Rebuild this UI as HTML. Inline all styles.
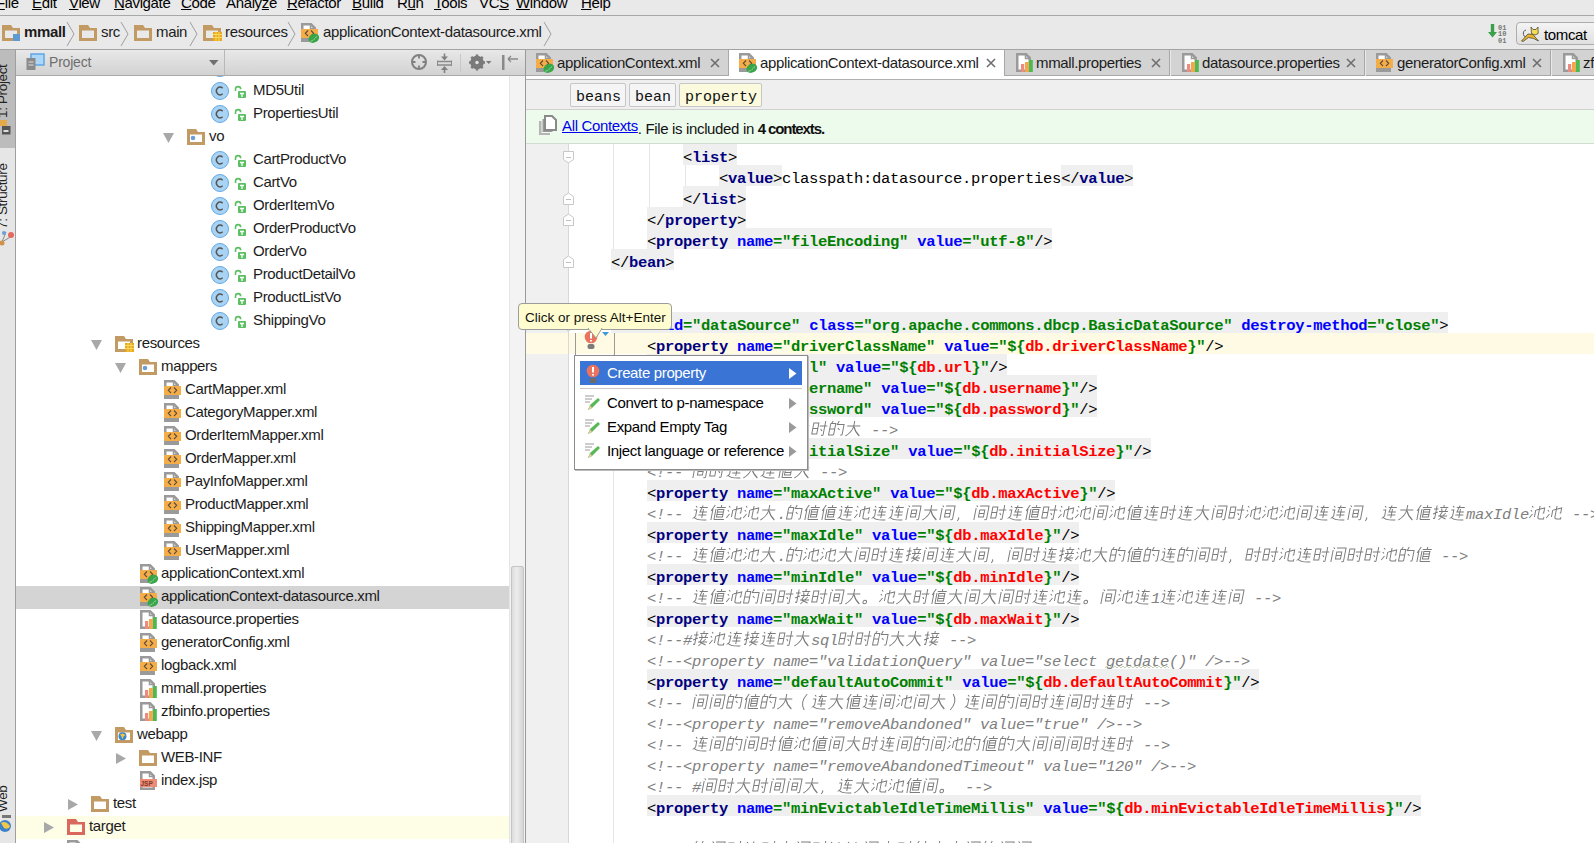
<!DOCTYPE html><html><head><meta charset="utf-8"><style>*{margin:0;padding:0;box-sizing:border-box}
html,body{width:1594px;height:843px;overflow:hidden;background:#e9e9e9;font-family:"Liberation Sans",sans-serif;position:relative}
.a{position:absolute}
svg.a{overflow:visible}
.ui{font-family:"Liberation Sans",sans-serif;font-size:15px;color:#000;white-space:pre;letter-spacing:-0.35px}
u{text-decoration:underline;text-underline-offset:1px}
.menubar{left:0;top:0;width:1594px;height:16px;background:#e9e9e9;border-bottom:1px solid #a8a8a8}
.menu{top:-7px;line-height:20px}
.navbar{left:0;top:16px;width:1594px;height:34px;background:#e9e9e9;border-bottom:1px solid #a3a3a3}
.nav{top:22px;line-height:20px;color:#1c1c1c}
.tomcat{left:1516px;top:22px;width:90px;height:23px;border:1px solid #adadad;border-radius:4px;background:linear-gradient(#f4f4f4,#e0e0e0)}
.strip{left:0;top:50px;width:16px;height:793px;background:#e6e6e6;border-right:1px solid #9f9f9f}
.ptab{left:0;top:50px;width:15px;height:98px;background:#bcbcbc}
.vtext{transform-origin:0 0;transform:rotate(-90deg);line-height:16px;font-size:13.5px;color:#222}
.phead{left:16px;top:50px;width:509px;height:26px;background:linear-gradient(#e8e8e8,#d2d2d2);border-bottom:1px solid #a9a9a9}
.tree{left:16px;top:76px;width:493px;height:767px;background:#fff;overflow:hidden}
.tr{line-height:23px;margin-top:-2px;color:#1c1c1c}
.sbar{left:509px;top:76px;width:16px;height:767px;background:#f3f3f3;border-left:1px solid #e4e4e4}
.thumb{left:511px;top:566px;width:13px;height:300px;border:1px solid #c4c4c4;border-radius:2px;background:linear-gradient(90deg,#dcdcdc,#ececec 40%,#d6d6d6)}
.divider{left:525px;top:50px;width:1px;height:793px;background:#999}
.tabbar{left:526px;top:50px;width:1068px;height:26px;background:#e9e9e9}
.tab{top:50px;height:26px;background:#d3d3d3;border-right:1px solid #a8a8a8;border-bottom:1px solid #a8a8a8}
.tab.act{background:#fff;border-bottom:none}
.tabt{top:52px;line-height:22px;color:#1c1c1c}
.crumbs{left:526px;top:79px;width:1068px;height:31px;background:#efefef;border-top:1px solid #b0b0b0;border-bottom:1px solid #d0d0d0}
.crumb{top:83px;height:24px;border:1px solid #c6c6c6;border-radius:2px;background:#f5f5f5;font-family:"Liberation Mono",monospace;font-size:15px;line-height:28px;text-indent:5px;color:#111}
.crumb.cur{background:#fbfadc}
.ctxbar{left:526px;top:110px;width:1068px;height:34px;background:#edfbed;border-bottom:1px solid #d3dcd3}
.ctx{top:119px;line-height:20px;color:#111}
.ctx b{letter-spacing:-1.1px}
.lnk{color:#0000ee;text-decoration:underline;position:relative;top:-3px}
.gutter{left:526px;top:144px;width:43px;height:699px;background:#f0f0f0}
.editor{left:569px;top:144px;width:1025px;height:699px;background:#fff}
.row{position:absolute;left:575px;height:21px;line-height:29px;font-family:"Liberation Mono",monospace;font-size:15.5px;letter-spacing:-0.3px;white-space:pre;color:#000}
.tg{background:#efefef;display:inline-block;height:21px;vertical-align:top}
.tg0{display:inline-block;height:21px;vertical-align:top}
.b{font-weight:normal;color:#000}
.t{font-weight:bold;color:#000080}
.n{font-weight:bold;color:#0000ff}
.v{font-weight:bold;color:#008000}
.p{font-weight:bold;color:#ff0000}
.c{font-style:italic;color:#808080}
.k{display:inline-block;width:17px;height:21px;vertical-align:top;transform:skewX(-11deg)}
.k use{fill:none;stroke:#7c7c7c;stroke-width:1}
.tip{left:518px;top:303px;width:154px;height:27px;background:#fffdd0;border:1px solid #9c9c9c;border-radius:4px;font-family:"Liberation Sans",sans-serif;font-size:13.5px;letter-spacing:0px;line-height:28px;text-indent:6px;white-space:pre;color:#111}
.popup{left:574px;top:355px;width:234px;height:115px;background:#fff;border:1px solid #8c8c8c;box-shadow:1px 1px 0 #bbb}
.sel{left:580px;top:361px;width:222px;height:24px;background:#3a74d4}
.pit{line-height:22px}
</style></head><body>
<svg width="0" height="0" style="position:absolute"><defs><symbol id="g0" viewBox="0 0 17 21"><path d="M3 5L4.5 6.5M2 9H4.5V15L2 17.5M3 16Q6 19.5 16 19M7 6.5H15M10 4.5L8 11H15M11 8V17M7 14H15"/></symbol><symbol id="g1" viewBox="0 0 17 21"><path d="M1.5 8H6M4 4.5V17Q4 18 2.5 17M1.5 13L6 11M11 4V6M7.5 6.5H15.5M9 7.5L10 10M14 7.5L13 10M7 10.5H16M10.5 10.5L8.5 15L15 18M14 12L8 19M7 15H16"/></symbol><symbol id="g2" viewBox="0 0 17 21"><path d="M2 5L3.5 6.5M1.5 9L3 10.5M1.5 17L4 13M7 9L15 7V12H14M10 5V16Q10 18 12 18H16V16M6.5 9V16"/></symbol><symbol id="g3" viewBox="0 0 17 21"><path d="M4 4L3 6M2 6.5H7V18M2 6.5V18H7M2 12H7M10 4L8.5 8M9 7.5H15.5V17Q15.5 18.5 13.5 18M10 11L12 13"/></symbol><symbol id="g4" viewBox="0 0 17 21"><path d="M2 9H15M8.5 4V9Q8 15 2 19M9 10Q11 15 16 19"/></symbol><symbol id="g5" viewBox="0 0 17 21"><path d="M2 6H7V17H2ZM2 11.5H7M8.5 9H16M13.5 4V17.5Q13.5 19 11.5 18M10 12L11.5 14"/></symbol><symbol id="g6" viewBox="0 0 17 21"><path d="M2.5 4.5L4 6M2.5 7V19M6 5H15V18Q15 19 13 18.5M6.5 9H11.5V16H6.5ZM6.5 12.5H11.5"/></symbol><symbol id="g7" viewBox="0 0 17 21"><path d="M5 4L2 10M3.5 8V19M7 6.5H16M11.5 4V6.5M8.5 8.5H14.5V16H8.5ZM8.5 11H14.5M8.5 13.5H14.5M6.5 18.5H16.5M6.5 8V18.5"/></symbol><symbol id="gc" viewBox="0 0 17 21"><path d="M3.5 16.5Q5 17.5 3 20"/></symbol><symbol id="gp" viewBox="0 0 17 21"><path d="M4 15.2A1.8 1.8 0 1 0 4.01 15.2Z"/></symbol><symbol id="gl" viewBox="0 0 17 21"><path d="M12 4Q6 12 12 20"/></symbol><symbol id="gr" viewBox="0 0 17 21"><path d="M5 4Q11 12 5 20"/></symbol></defs></svg>
<div class="a menubar"></div>
<div class="a ui menu" style="left:-4px"><u>F</u>ile</div>
<div class="a ui menu" style="left:32px"><u>E</u>dit</div>
<div class="a ui menu" style="left:69px"><u>V</u>iew</div>
<div class="a ui menu" style="left:114px"><u>N</u>avigate</div>
<div class="a ui menu" style="left:181px"><u>C</u>ode</div>
<div class="a ui menu" style="left:226px">Analy<u>z</u>e</div>
<div class="a ui menu" style="left:287px"><u>R</u>efactor</div>
<div class="a ui menu" style="left:352px"><u>B</u>uild</div>
<div class="a ui menu" style="left:397px">R<u>u</u>n</div>
<div class="a ui menu" style="left:434px"><u>T</u>ools</div>
<div class="a ui menu" style="left:479px">VC<u>S</u></div>
<div class="a ui menu" style="left:516px"><u>W</u>indow</div>
<div class="a ui menu" style="left:581px"><u>H</u>elp</div>
<div class="a navbar"></div>
<svg class="a" style="left:2px;top:25px" width="20" height="17" viewBox="0 0 20 17"><path d="M0 0H9L11 3H18V16H0ZM3 5.5V13H15V5.5Z" fill="#c29a63" fill-rule="evenodd"/><rect x="11" y="9" width="7" height="7" fill="#5e9bd3"/></svg>
<div class="a ui nav" style="left:24px;font-weight:bold">mmall</div>
<svg class="a" style="left:79px;top:25px" width="20" height="17" viewBox="0 0 20 17"><path d="M0 0H9L11 3H18V16H0ZM3 5.5V13H15V5.5Z" fill="#c29a63" fill-rule="evenodd"/></svg>
<div class="a ui nav" style="left:101px">src</div>
<svg class="a" style="left:134px;top:25px" width="20" height="17" viewBox="0 0 20 17"><path d="M0 0H9L11 3H18V16H0ZM3 5.5V13H15V5.5Z" fill="#c29a63" fill-rule="evenodd"/></svg>
<div class="a ui nav" style="left:156px">main</div>
<svg class="a" style="left:203px;top:25px" width="20" height="17" viewBox="0 0 20 17"><path d="M0 0H9L11 3H18V16H0ZM3 5.5V13H15V5.5Z" fill="#c29a63" fill-rule="evenodd"/><rect x="10" y="7" width="9" height="9" fill="#e8a91c"/><path d="M10 9.5H19M10 12.5H19M13 7V16M16 7V16" stroke="#f8d860" stroke-width="1"/></svg>
<div class="a ui nav" style="left:225px">resources</div>
<svg class="a" style="left:301px;top:23px" width="19" height="22" viewBox="0 0 19 22"><path d="M1.25 1.25H10L13.75 5V17.75H1.25Z" fill="#fff" stroke="#9a9a9a" stroke-width="2.5"/><path d="M9.5 1.5V5.5H13.5" fill="none" stroke="#9a9a9a" stroke-width="1.5"/><rect x="0" y="15" width="15" height="4" fill="#9a9a9a"/><rect x="0" y="6" width="17" height="9" fill="#f4ad47"/><path d="M7 7.5L4.3 10.3L7 13M10 7.5L12.7 10.3L10 13" fill="none" stroke="#5e4b3f" stroke-width="1.1"/><ellipse cx="12.8" cy="15.3" rx="5.6" ry="4.3" fill="#37a548" transform="rotate(-28 12.8 15.3)"/><path d="M9.5 18.3Q13.5 17 16 13" fill="none" stroke="#d8efd8" stroke-width="0.9" stroke-dasharray="1.2 0.8"/></svg>
<div class="a ui nav" style="left:323px">applicationContext-datasource.xml</div>
<svg class="a" style="left:66px;top:22px" width="10" height="24" viewBox="0 0 10 24"><path d="M1 0L8 12L1 24" fill="none" stroke="#8a8a8a" stroke-width="0.8"/></svg>
<svg class="a" style="left:120px;top:22px" width="10" height="24" viewBox="0 0 10 24"><path d="M1 0L8 12L1 24" fill="none" stroke="#8a8a8a" stroke-width="0.8"/></svg>
<svg class="a" style="left:189px;top:22px" width="10" height="24" viewBox="0 0 10 24"><path d="M1 0L8 12L1 24" fill="none" stroke="#8a8a8a" stroke-width="0.8"/></svg>
<svg class="a" style="left:287px;top:22px" width="10" height="24" viewBox="0 0 10 24"><path d="M1 0L8 12L1 24" fill="none" stroke="#8a8a8a" stroke-width="0.8"/></svg>
<svg class="a" style="left:543px;top:22px" width="10" height="24" viewBox="0 0 10 24"><path d="M1 0L8 12L1 24" fill="none" stroke="#8a8a8a" stroke-width="0.8"/></svg>
<svg class="a" style="left:1488px;top:22px" width="22" height="24" viewBox="0 0 22 24"><rect x="2.8" y="2" width="3.4" height="10" fill="#3aa04a"/><path d="M0 10H9L4.5 15.5Z" fill="#3aa04a"/><g font-family="Liberation Mono" font-size="7" font-weight="bold" fill="#777"><text x="10" y="7.5">01</text><text x="10" y="14">10</text><text x="10" y="20.5">01</text></g></svg>
<div class="a tomcat"></div>
<svg class="a" style="left:1521px;top:26px" width="20" height="18" viewBox="0 0 20 18"><path d="M5 4A3.5 3.5 0 1 0 7 11" fill="none" stroke="#555" stroke-width="1"/><path d="M0.5 15L7 8L12 8.5L17.5 15L12.5 12.5L7.5 11.5L2 15.5Z" fill="#e9b32e" stroke="#3a3a2a" stroke-width="0.7"/><path d="M10 1L12 3.5H15L17 1L17.2 7.5Q14 10.5 10.5 7.5Z" fill="#f3dc55" stroke="#3a3a2a" stroke-width="0.7"/></svg>
<div class="a ui" style="left:1544px;top:25px;line-height:20px;font-size:15px">tomcat</div>
<div class="a strip"></div><div class="a ptab"></div>
<div class="a ui vtext" style="left:-5px;top:118px">1: Project</div>
<svg class="a" style="left:0px;top:118px" width="15" height="18" viewBox="0 0 15 18"><rect x="0" y="2" width="7" height="6" fill="#e3a94b"/><rect x="2" y="8" width="8.5" height="8.5" fill="#555"/><rect x="3.5" y="12" width="5" height="2" fill="#ddd"/></svg>
<div class="a ui vtext" style="left:-5px;top:229px">7: Structure</div>
<svg class="a" style="left:0px;top:228px" width="15" height="22" viewBox="0 0 15 22"><path d="M2 14L6 4M2 14L12 8" stroke="#888" stroke-width="1"/><circle cx="2" cy="15" r="2.5" fill="#d0924a"/><circle cx="11" cy="7" r="3" fill="#e46a5e"/><circle cx="4" cy="5" r="2" fill="#6aa0d8"/></svg>
<div class="a ui vtext" style="left:-5px;top:812px">Web</div>
<svg class="a" style="left:0px;top:815px" width="15" height="20" viewBox="0 0 15 20"><rect x="2" y="0" width="9" height="3" fill="#777"/><circle cx="5" cy="11" r="6" fill="#3d83c9"/><path d="M1 8Q4 6 7 8T10 12Q7 15 4 13Z" fill="#f2c84b"/></svg>
<div class="a phead"></div>
<div class="a" style="left:224px;top:50px;width:1px;height:25px;background:#b8b8b8"></div>
<svg class="a" style="left:26px;top:53px" width="20" height="18" viewBox="0 0 20 18"><rect x="5" y="1" width="13" height="11" fill="#aed6f7" stroke="#5ea6e6" stroke-width="1.5"/><rect x="0.5" y="5" width="9" height="12" fill="#8a8a8a"/><path d="M2.5 9H7.5M2.5 12H7.5" stroke="#ddd" stroke-width="1"/></svg>
<div class="a ui" style="left:49px;top:51px;line-height:22px;color:#6e6e6e;font-size:14px;letter-spacing:-0.2px">Project</div>
<svg class="a" style="left:209px;top:60px" width="10" height="6" viewBox="0 0 10 6"><path d="M0 0H9.5L4.75 5.5Z" fill="#707070"/></svg>
<svg class="a" style="left:410px;top:53px" width="19" height="19" viewBox="0 0 19 19"><circle cx="9" cy="9" r="7" fill="none" stroke="#808080" stroke-width="2"/><path d="M9 2V5.5M9 12.5V16M2 9H5.5M12.5 9H16" stroke="#808080" stroke-width="1.8"/></svg>
<svg class="a" style="left:437px;top:53px" width="16" height="19" viewBox="0 0 16 19"><path d="M0.5 8.5H14.5M0.5 12H14.5" stroke="#8a8a8a" stroke-width="1.5"/><path d="M0.5 7.5V13M14.5 7.5V13" stroke="#8a8a8a" stroke-width="1"/><path d="M4 3.5H11L7.5 7.5Z M4 17H11L7.5 13Z" fill="#808080"/><path d="M7.5 0.5V4M7.5 16.5V20" stroke="#808080" stroke-width="1.6"/></svg>
<div class="a" style="left:460px;top:54px;width:1px;height:18px;background:#c8c8c8"></div>
<svg class="a" style="left:469px;top:53px" width="24" height="19" viewBox="0 0 24 19"><circle cx="8" cy="9.5" r="5" fill="none" stroke="#7a7a7a" stroke-width="3.6"/><path d="M8 1.5V17.5M0 9.5H16M2.3 3.8L13.7 15.2M2.3 15.2L13.7 3.8" stroke="#7a7a7a" stroke-width="2.6"/><circle cx="8" cy="9.5" r="1.7" fill="#e2e2e2"/><path d="M17 8H22.5L19.75 11Z" fill="#7a7a7a"/></svg>
<svg class="a" style="left:501px;top:53px" width="18" height="19" viewBox="0 0 18 19"><rect x="1" y="2" width="2.5" height="15" fill="#8a8a8a"/><path d="M7 6H17M7 6L10 3M7 6L10 9" fill="none" stroke="#8a8a8a" stroke-width="1.3"/></svg>
<div class="a tree">
<svg class="a" style="left:195px;top:-17px" width="19" height="19" viewBox="0 0 19 19"><circle cx="9" cy="9" r="8.5" fill="#a9d3f3" stroke="#62a9e6" stroke-width="1"/><path d="M11.6 6.2A3.6 3.9 0 1 0 11.6 11.8" fill="none" stroke="#545454" stroke-width="1.5"/></svg>
<svg class="a" style="left:218px;top:-13px" width="12" height="12" viewBox="0 0 12 12"><path d="M1.5 5V3.2A2.6 2.6 0 0 1 6.7 3.2" fill="none" stroke="#5cbf63" stroke-width="1.6"/><rect x="4" y="5" width="8" height="7" rx="1" fill="#5cbf63"/><path d="M6 7.5H10M8 7.5V11" stroke="#fff" stroke-width="1.3"/></svg>
<svg class="a" style="left:195px;top:6px" width="19" height="19" viewBox="0 0 19 19"><circle cx="9" cy="9" r="8.5" fill="#a9d3f3" stroke="#62a9e6" stroke-width="1"/><path d="M11.6 6.2A3.6 3.9 0 1 0 11.6 11.8" fill="none" stroke="#545454" stroke-width="1.5"/></svg>
<svg class="a" style="left:218px;top:10px" width="12" height="12" viewBox="0 0 12 12"><path d="M1.5 5V3.2A2.6 2.6 0 0 1 6.7 3.2" fill="none" stroke="#5cbf63" stroke-width="1.6"/><rect x="4" y="5" width="8" height="7" rx="1" fill="#5cbf63"/><path d="M6 7.5H10M8 7.5V11" stroke="#fff" stroke-width="1.3"/></svg>
<div class="a ui tr" style="left:237px;top:4px">MD5Util</div>
<svg class="a" style="left:195px;top:29px" width="19" height="19" viewBox="0 0 19 19"><circle cx="9" cy="9" r="8.5" fill="#a9d3f3" stroke="#62a9e6" stroke-width="1"/><path d="M11.6 6.2A3.6 3.9 0 1 0 11.6 11.8" fill="none" stroke="#545454" stroke-width="1.5"/></svg>
<svg class="a" style="left:218px;top:33px" width="12" height="12" viewBox="0 0 12 12"><path d="M1.5 5V3.2A2.6 2.6 0 0 1 6.7 3.2" fill="none" stroke="#5cbf63" stroke-width="1.6"/><rect x="4" y="5" width="8" height="7" rx="1" fill="#5cbf63"/><path d="M6 7.5H10M8 7.5V11" stroke="#fff" stroke-width="1.3"/></svg>
<div class="a ui tr" style="left:237px;top:27px">PropertiesUtil</div>
<svg class="a" style="left:171px;top:53px" width="20" height="17" viewBox="0 0 20 17"><path d="M0 0H9L11 3H18V16H0ZM3 5.5V13H15V5.5Z" fill="#c29a63" fill-rule="evenodd"/><circle cx="6" cy="9" r="2.3" fill="#6b9fd6"/></svg>
<svg class="a" style="left:147px;top:57px" width="12" height="11" viewBox="0 0 12 11"><path d="M0 0H11L5.5 10Z" fill="#a8a8a8"/></svg>
<div class="a ui tr" style="left:193px;top:50px">vo</div>
<svg class="a" style="left:195px;top:75px" width="19" height="19" viewBox="0 0 19 19"><circle cx="9" cy="9" r="8.5" fill="#a9d3f3" stroke="#62a9e6" stroke-width="1"/><path d="M11.6 6.2A3.6 3.9 0 1 0 11.6 11.8" fill="none" stroke="#545454" stroke-width="1.5"/></svg>
<svg class="a" style="left:218px;top:79px" width="12" height="12" viewBox="0 0 12 12"><path d="M1.5 5V3.2A2.6 2.6 0 0 1 6.7 3.2" fill="none" stroke="#5cbf63" stroke-width="1.6"/><rect x="4" y="5" width="8" height="7" rx="1" fill="#5cbf63"/><path d="M6 7.5H10M8 7.5V11" stroke="#fff" stroke-width="1.3"/></svg>
<div class="a ui tr" style="left:237px;top:73px">CartProductVo</div>
<svg class="a" style="left:195px;top:98px" width="19" height="19" viewBox="0 0 19 19"><circle cx="9" cy="9" r="8.5" fill="#a9d3f3" stroke="#62a9e6" stroke-width="1"/><path d="M11.6 6.2A3.6 3.9 0 1 0 11.6 11.8" fill="none" stroke="#545454" stroke-width="1.5"/></svg>
<svg class="a" style="left:218px;top:102px" width="12" height="12" viewBox="0 0 12 12"><path d="M1.5 5V3.2A2.6 2.6 0 0 1 6.7 3.2" fill="none" stroke="#5cbf63" stroke-width="1.6"/><rect x="4" y="5" width="8" height="7" rx="1" fill="#5cbf63"/><path d="M6 7.5H10M8 7.5V11" stroke="#fff" stroke-width="1.3"/></svg>
<div class="a ui tr" style="left:237px;top:96px">CartVo</div>
<svg class="a" style="left:195px;top:121px" width="19" height="19" viewBox="0 0 19 19"><circle cx="9" cy="9" r="8.5" fill="#a9d3f3" stroke="#62a9e6" stroke-width="1"/><path d="M11.6 6.2A3.6 3.9 0 1 0 11.6 11.8" fill="none" stroke="#545454" stroke-width="1.5"/></svg>
<svg class="a" style="left:218px;top:125px" width="12" height="12" viewBox="0 0 12 12"><path d="M1.5 5V3.2A2.6 2.6 0 0 1 6.7 3.2" fill="none" stroke="#5cbf63" stroke-width="1.6"/><rect x="4" y="5" width="8" height="7" rx="1" fill="#5cbf63"/><path d="M6 7.5H10M8 7.5V11" stroke="#fff" stroke-width="1.3"/></svg>
<div class="a ui tr" style="left:237px;top:119px">OrderItemVo</div>
<svg class="a" style="left:195px;top:144px" width="19" height="19" viewBox="0 0 19 19"><circle cx="9" cy="9" r="8.5" fill="#a9d3f3" stroke="#62a9e6" stroke-width="1"/><path d="M11.6 6.2A3.6 3.9 0 1 0 11.6 11.8" fill="none" stroke="#545454" stroke-width="1.5"/></svg>
<svg class="a" style="left:218px;top:148px" width="12" height="12" viewBox="0 0 12 12"><path d="M1.5 5V3.2A2.6 2.6 0 0 1 6.7 3.2" fill="none" stroke="#5cbf63" stroke-width="1.6"/><rect x="4" y="5" width="8" height="7" rx="1" fill="#5cbf63"/><path d="M6 7.5H10M8 7.5V11" stroke="#fff" stroke-width="1.3"/></svg>
<div class="a ui tr" style="left:237px;top:142px">OrderProductVo</div>
<svg class="a" style="left:195px;top:167px" width="19" height="19" viewBox="0 0 19 19"><circle cx="9" cy="9" r="8.5" fill="#a9d3f3" stroke="#62a9e6" stroke-width="1"/><path d="M11.6 6.2A3.6 3.9 0 1 0 11.6 11.8" fill="none" stroke="#545454" stroke-width="1.5"/></svg>
<svg class="a" style="left:218px;top:171px" width="12" height="12" viewBox="0 0 12 12"><path d="M1.5 5V3.2A2.6 2.6 0 0 1 6.7 3.2" fill="none" stroke="#5cbf63" stroke-width="1.6"/><rect x="4" y="5" width="8" height="7" rx="1" fill="#5cbf63"/><path d="M6 7.5H10M8 7.5V11" stroke="#fff" stroke-width="1.3"/></svg>
<div class="a ui tr" style="left:237px;top:165px">OrderVo</div>
<svg class="a" style="left:195px;top:190px" width="19" height="19" viewBox="0 0 19 19"><circle cx="9" cy="9" r="8.5" fill="#a9d3f3" stroke="#62a9e6" stroke-width="1"/><path d="M11.6 6.2A3.6 3.9 0 1 0 11.6 11.8" fill="none" stroke="#545454" stroke-width="1.5"/></svg>
<svg class="a" style="left:218px;top:194px" width="12" height="12" viewBox="0 0 12 12"><path d="M1.5 5V3.2A2.6 2.6 0 0 1 6.7 3.2" fill="none" stroke="#5cbf63" stroke-width="1.6"/><rect x="4" y="5" width="8" height="7" rx="1" fill="#5cbf63"/><path d="M6 7.5H10M8 7.5V11" stroke="#fff" stroke-width="1.3"/></svg>
<div class="a ui tr" style="left:237px;top:188px">ProductDetailVo</div>
<svg class="a" style="left:195px;top:213px" width="19" height="19" viewBox="0 0 19 19"><circle cx="9" cy="9" r="8.5" fill="#a9d3f3" stroke="#62a9e6" stroke-width="1"/><path d="M11.6 6.2A3.6 3.9 0 1 0 11.6 11.8" fill="none" stroke="#545454" stroke-width="1.5"/></svg>
<svg class="a" style="left:218px;top:217px" width="12" height="12" viewBox="0 0 12 12"><path d="M1.5 5V3.2A2.6 2.6 0 0 1 6.7 3.2" fill="none" stroke="#5cbf63" stroke-width="1.6"/><rect x="4" y="5" width="8" height="7" rx="1" fill="#5cbf63"/><path d="M6 7.5H10M8 7.5V11" stroke="#fff" stroke-width="1.3"/></svg>
<div class="a ui tr" style="left:237px;top:211px">ProductListVo</div>
<svg class="a" style="left:195px;top:236px" width="19" height="19" viewBox="0 0 19 19"><circle cx="9" cy="9" r="8.5" fill="#a9d3f3" stroke="#62a9e6" stroke-width="1"/><path d="M11.6 6.2A3.6 3.9 0 1 0 11.6 11.8" fill="none" stroke="#545454" stroke-width="1.5"/></svg>
<svg class="a" style="left:218px;top:240px" width="12" height="12" viewBox="0 0 12 12"><path d="M1.5 5V3.2A2.6 2.6 0 0 1 6.7 3.2" fill="none" stroke="#5cbf63" stroke-width="1.6"/><rect x="4" y="5" width="8" height="7" rx="1" fill="#5cbf63"/><path d="M6 7.5H10M8 7.5V11" stroke="#fff" stroke-width="1.3"/></svg>
<div class="a ui tr" style="left:237px;top:234px">ShippingVo</div>
<svg class="a" style="left:99px;top:260px" width="20" height="17" viewBox="0 0 20 17"><path d="M0 0H9L11 3H18V16H0ZM3 5.5V13H15V5.5Z" fill="#c29a63" fill-rule="evenodd"/><rect x="10" y="7" width="9" height="9" fill="#e8a91c"/><path d="M10 9.5H19M10 12.5H19M13 7V16M16 7V16" stroke="#f8d860" stroke-width="1"/></svg>
<svg class="a" style="left:75px;top:264px" width="12" height="11" viewBox="0 0 12 11"><path d="M0 0H11L5.5 10Z" fill="#a8a8a8"/></svg>
<div class="a ui tr" style="left:121px;top:257px">resources</div>
<svg class="a" style="left:123px;top:283px" width="20" height="17" viewBox="0 0 20 17"><path d="M0 0H9L11 3H18V16H0ZM3 5.5V13H15V5.5Z" fill="#c29a63" fill-rule="evenodd"/><circle cx="6" cy="9" r="2.3" fill="#6b9fd6"/></svg>
<svg class="a" style="left:99px;top:287px" width="12" height="11" viewBox="0 0 12 11"><path d="M0 0H11L5.5 10Z" fill="#a8a8a8"/></svg>
<div class="a ui tr" style="left:145px;top:280px">mappers</div>
<svg class="a" style="left:148px;top:304px" width="19" height="22" viewBox="0 0 19 22"><path d="M1.25 1.25H10L13.75 5V17.75H1.25Z" fill="#fff" stroke="#9a9a9a" stroke-width="2.5"/><path d="M9.5 1.5V5.5H13.5" fill="none" stroke="#9a9a9a" stroke-width="1.5"/><rect x="0" y="15" width="15" height="4" fill="#9a9a9a"/><rect x="0" y="6" width="17" height="9" fill="#f4ad47"/><path d="M7 7.5L4.3 10.3L7 13M10 7.5L12.7 10.3L10 13" fill="none" stroke="#5e4b3f" stroke-width="1.1"/></svg>
<div class="a ui tr" style="left:169px;top:303px">CartMapper.xml</div>
<svg class="a" style="left:148px;top:327px" width="19" height="22" viewBox="0 0 19 22"><path d="M1.25 1.25H10L13.75 5V17.75H1.25Z" fill="#fff" stroke="#9a9a9a" stroke-width="2.5"/><path d="M9.5 1.5V5.5H13.5" fill="none" stroke="#9a9a9a" stroke-width="1.5"/><rect x="0" y="15" width="15" height="4" fill="#9a9a9a"/><rect x="0" y="6" width="17" height="9" fill="#f4ad47"/><path d="M7 7.5L4.3 10.3L7 13M10 7.5L12.7 10.3L10 13" fill="none" stroke="#5e4b3f" stroke-width="1.1"/></svg>
<div class="a ui tr" style="left:169px;top:326px">CategoryMapper.xml</div>
<svg class="a" style="left:148px;top:350px" width="19" height="22" viewBox="0 0 19 22"><path d="M1.25 1.25H10L13.75 5V17.75H1.25Z" fill="#fff" stroke="#9a9a9a" stroke-width="2.5"/><path d="M9.5 1.5V5.5H13.5" fill="none" stroke="#9a9a9a" stroke-width="1.5"/><rect x="0" y="15" width="15" height="4" fill="#9a9a9a"/><rect x="0" y="6" width="17" height="9" fill="#f4ad47"/><path d="M7 7.5L4.3 10.3L7 13M10 7.5L12.7 10.3L10 13" fill="none" stroke="#5e4b3f" stroke-width="1.1"/></svg>
<div class="a ui tr" style="left:169px;top:349px">OrderItemMapper.xml</div>
<svg class="a" style="left:148px;top:373px" width="19" height="22" viewBox="0 0 19 22"><path d="M1.25 1.25H10L13.75 5V17.75H1.25Z" fill="#fff" stroke="#9a9a9a" stroke-width="2.5"/><path d="M9.5 1.5V5.5H13.5" fill="none" stroke="#9a9a9a" stroke-width="1.5"/><rect x="0" y="15" width="15" height="4" fill="#9a9a9a"/><rect x="0" y="6" width="17" height="9" fill="#f4ad47"/><path d="M7 7.5L4.3 10.3L7 13M10 7.5L12.7 10.3L10 13" fill="none" stroke="#5e4b3f" stroke-width="1.1"/></svg>
<div class="a ui tr" style="left:169px;top:372px">OrderMapper.xml</div>
<svg class="a" style="left:148px;top:396px" width="19" height="22" viewBox="0 0 19 22"><path d="M1.25 1.25H10L13.75 5V17.75H1.25Z" fill="#fff" stroke="#9a9a9a" stroke-width="2.5"/><path d="M9.5 1.5V5.5H13.5" fill="none" stroke="#9a9a9a" stroke-width="1.5"/><rect x="0" y="15" width="15" height="4" fill="#9a9a9a"/><rect x="0" y="6" width="17" height="9" fill="#f4ad47"/><path d="M7 7.5L4.3 10.3L7 13M10 7.5L12.7 10.3L10 13" fill="none" stroke="#5e4b3f" stroke-width="1.1"/></svg>
<div class="a ui tr" style="left:169px;top:395px">PayInfoMapper.xml</div>
<svg class="a" style="left:148px;top:419px" width="19" height="22" viewBox="0 0 19 22"><path d="M1.25 1.25H10L13.75 5V17.75H1.25Z" fill="#fff" stroke="#9a9a9a" stroke-width="2.5"/><path d="M9.5 1.5V5.5H13.5" fill="none" stroke="#9a9a9a" stroke-width="1.5"/><rect x="0" y="15" width="15" height="4" fill="#9a9a9a"/><rect x="0" y="6" width="17" height="9" fill="#f4ad47"/><path d="M7 7.5L4.3 10.3L7 13M10 7.5L12.7 10.3L10 13" fill="none" stroke="#5e4b3f" stroke-width="1.1"/></svg>
<div class="a ui tr" style="left:169px;top:418px">ProductMapper.xml</div>
<svg class="a" style="left:148px;top:442px" width="19" height="22" viewBox="0 0 19 22"><path d="M1.25 1.25H10L13.75 5V17.75H1.25Z" fill="#fff" stroke="#9a9a9a" stroke-width="2.5"/><path d="M9.5 1.5V5.5H13.5" fill="none" stroke="#9a9a9a" stroke-width="1.5"/><rect x="0" y="15" width="15" height="4" fill="#9a9a9a"/><rect x="0" y="6" width="17" height="9" fill="#f4ad47"/><path d="M7 7.5L4.3 10.3L7 13M10 7.5L12.7 10.3L10 13" fill="none" stroke="#5e4b3f" stroke-width="1.1"/></svg>
<div class="a ui tr" style="left:169px;top:441px">ShippingMapper.xml</div>
<svg class="a" style="left:148px;top:465px" width="19" height="22" viewBox="0 0 19 22"><path d="M1.25 1.25H10L13.75 5V17.75H1.25Z" fill="#fff" stroke="#9a9a9a" stroke-width="2.5"/><path d="M9.5 1.5V5.5H13.5" fill="none" stroke="#9a9a9a" stroke-width="1.5"/><rect x="0" y="15" width="15" height="4" fill="#9a9a9a"/><rect x="0" y="6" width="17" height="9" fill="#f4ad47"/><path d="M7 7.5L4.3 10.3L7 13M10 7.5L12.7 10.3L10 13" fill="none" stroke="#5e4b3f" stroke-width="1.1"/></svg>
<div class="a ui tr" style="left:169px;top:464px">UserMapper.xml</div>
<svg class="a" style="left:124px;top:488px" width="19" height="22" viewBox="0 0 19 22"><path d="M1.25 1.25H10L13.75 5V17.75H1.25Z" fill="#fff" stroke="#9a9a9a" stroke-width="2.5"/><path d="M9.5 1.5V5.5H13.5" fill="none" stroke="#9a9a9a" stroke-width="1.5"/><rect x="0" y="15" width="15" height="4" fill="#9a9a9a"/><rect x="0" y="6" width="17" height="9" fill="#f4ad47"/><path d="M7 7.5L4.3 10.3L7 13M10 7.5L12.7 10.3L10 13" fill="none" stroke="#5e4b3f" stroke-width="1.1"/><ellipse cx="12.8" cy="15.3" rx="5.6" ry="4.3" fill="#37a548" transform="rotate(-28 12.8 15.3)"/><path d="M9.5 18.3Q13.5 17 16 13" fill="none" stroke="#d8efd8" stroke-width="0.9" stroke-dasharray="1.2 0.8"/></svg>
<div class="a ui tr" style="left:145px;top:487px">applicationContext.xml</div>
<div class="a" style="left:0;top:510px;width:493px;height:23px;background:#d4d4d4"></div>
<svg class="a" style="left:124px;top:511px" width="19" height="22" viewBox="0 0 19 22"><path d="M1.25 1.25H10L13.75 5V17.75H1.25Z" fill="#fff" stroke="#9a9a9a" stroke-width="2.5"/><path d="M9.5 1.5V5.5H13.5" fill="none" stroke="#9a9a9a" stroke-width="1.5"/><rect x="0" y="15" width="15" height="4" fill="#9a9a9a"/><rect x="0" y="6" width="17" height="9" fill="#f4ad47"/><path d="M7 7.5L4.3 10.3L7 13M10 7.5L12.7 10.3L10 13" fill="none" stroke="#5e4b3f" stroke-width="1.1"/><ellipse cx="12.8" cy="15.3" rx="5.6" ry="4.3" fill="#37a548" transform="rotate(-28 12.8 15.3)"/><path d="M9.5 18.3Q13.5 17 16 13" fill="none" stroke="#d8efd8" stroke-width="0.9" stroke-dasharray="1.2 0.8"/></svg>
<div class="a ui tr" style="left:145px;top:510px">applicationContext-datasource.xml</div>
<svg class="a" style="left:124px;top:534px" width="18" height="21" viewBox="0 0 18 21"><path d="M1.25 1.25H10L13.75 5V17.75H1.25Z" fill="#fff" stroke="#9a9a9a" stroke-width="2.5"/><path d="M9.5 1.5V5.5H13.5" fill="none" stroke="#9a9a9a" stroke-width="1.5"/><rect x="5" y="11" width="3.2" height="8" fill="#ee8a80"/><rect x="9" y="9" width="3.8" height="10" fill="#f2a74a"/><rect x="13" y="7" width="3.8" height="12" fill="#4fb851"/></svg>
<div class="a ui tr" style="left:145px;top:533px">datasource.properties</div>
<svg class="a" style="left:124px;top:557px" width="19" height="22" viewBox="0 0 19 22"><path d="M1.25 1.25H10L13.75 5V17.75H1.25Z" fill="#fff" stroke="#9a9a9a" stroke-width="2.5"/><path d="M9.5 1.5V5.5H13.5" fill="none" stroke="#9a9a9a" stroke-width="1.5"/><rect x="0" y="15" width="15" height="4" fill="#9a9a9a"/><rect x="0" y="6" width="17" height="9" fill="#f4ad47"/><path d="M7 7.5L4.3 10.3L7 13M10 7.5L12.7 10.3L10 13" fill="none" stroke="#5e4b3f" stroke-width="1.1"/></svg>
<div class="a ui tr" style="left:145px;top:556px">generatorConfig.xml</div>
<svg class="a" style="left:124px;top:580px" width="19" height="22" viewBox="0 0 19 22"><path d="M1.25 1.25H10L13.75 5V17.75H1.25Z" fill="#fff" stroke="#9a9a9a" stroke-width="2.5"/><path d="M9.5 1.5V5.5H13.5" fill="none" stroke="#9a9a9a" stroke-width="1.5"/><rect x="0" y="15" width="15" height="4" fill="#9a9a9a"/><rect x="0" y="6" width="17" height="9" fill="#f4ad47"/><path d="M7 7.5L4.3 10.3L7 13M10 7.5L12.7 10.3L10 13" fill="none" stroke="#5e4b3f" stroke-width="1.1"/></svg>
<div class="a ui tr" style="left:145px;top:579px">logback.xml</div>
<svg class="a" style="left:124px;top:603px" width="18" height="21" viewBox="0 0 18 21"><path d="M1.25 1.25H10L13.75 5V17.75H1.25Z" fill="#fff" stroke="#9a9a9a" stroke-width="2.5"/><path d="M9.5 1.5V5.5H13.5" fill="none" stroke="#9a9a9a" stroke-width="1.5"/><rect x="5" y="11" width="3.2" height="8" fill="#ee8a80"/><rect x="9" y="9" width="3.8" height="10" fill="#f2a74a"/><rect x="13" y="7" width="3.8" height="12" fill="#4fb851"/></svg>
<div class="a ui tr" style="left:145px;top:602px">mmall.properties</div>
<svg class="a" style="left:124px;top:626px" width="18" height="21" viewBox="0 0 18 21"><path d="M1.25 1.25H10L13.75 5V17.75H1.25Z" fill="#fff" stroke="#9a9a9a" stroke-width="2.5"/><path d="M9.5 1.5V5.5H13.5" fill="none" stroke="#9a9a9a" stroke-width="1.5"/><rect x="5" y="11" width="3.2" height="8" fill="#ee8a80"/><rect x="9" y="9" width="3.8" height="10" fill="#f2a74a"/><rect x="13" y="7" width="3.8" height="12" fill="#4fb851"/></svg>
<div class="a ui tr" style="left:145px;top:625px">zfbinfo.properties</div>
<svg class="a" style="left:99px;top:651px" width="20" height="17" viewBox="0 0 20 17"><path d="M0 0H9L11 3H18V16H0ZM3 5.5V13H15V5.5Z" fill="#c29a63" fill-rule="evenodd"/><circle cx="7.5" cy="9.3" r="4" fill="#3a86d0"/><path d="M5 7.5L7.5 6.5L10.5 8L8.5 9.5L7.5 12.5L6.5 9.5Z" fill="#f5c542"/></svg>
<svg class="a" style="left:75px;top:655px" width="12" height="11" viewBox="0 0 12 11"><path d="M0 0H11L5.5 10Z" fill="#a8a8a8"/></svg>
<div class="a ui tr" style="left:121px;top:648px">webapp</div>
<svg class="a" style="left:123px;top:674px" width="20" height="17" viewBox="0 0 20 17"><path d="M0 0H9L11 3H18V16H0ZM3 5.5V13H15V5.5Z" fill="#c29a63" fill-rule="evenodd"/></svg>
<svg class="a" style="left:100px;top:677px" width="11" height="12" viewBox="0 0 11 12"><path d="M0 0V11L10 5.5Z" fill="#a8a8a8"/></svg>
<div class="a ui tr" style="left:145px;top:671px">WEB-INF</div>
<svg class="a" style="left:124px;top:695px" width="17" height="21" viewBox="0 0 17 21"><path d="M1.25 1.25H10L13.75 5V17.75H1.25Z" fill="#fff" stroke="#9a9a9a" stroke-width="2.5"/><path d="M9.5 1.5V5.5H13.5" fill="none" stroke="#9a9a9a" stroke-width="1.5"/><rect x="0" y="8" width="17" height="8" fill="#ef8a74"/><text x="0.5" y="14.5" font-family="Liberation Sans" font-size="6.5" font-weight="bold" fill="#7a3b2b">JSP</text></svg>
<div class="a ui tr" style="left:145px;top:694px">index.jsp</div>
<svg class="a" style="left:75px;top:720px" width="20" height="17" viewBox="0 0 20 17"><path d="M0 0H9L11 3H18V16H0ZM3 5.5V13H15V5.5Z" fill="#c29a63" fill-rule="evenodd"/></svg>
<svg class="a" style="left:52px;top:723px" width="11" height="12" viewBox="0 0 11 12"><path d="M0 0V11L10 5.5Z" fill="#a8a8a8"/></svg>
<div class="a ui tr" style="left:97px;top:717px">test</div>
<div class="a" style="left:0;top:740px;width:493px;height:23px;background:#fefde6"></div>
<svg class="a" style="left:51px;top:743px" width="20" height="17" viewBox="0 0 20 17"><path d="M0 0H9L11 3H18V16H0ZM3 5.5V13H15V5.5Z" fill="#d9695f" fill-rule="evenodd"/></svg>
<svg class="a" style="left:28px;top:746px" width="11" height="12" viewBox="0 0 11 12"><path d="M0 0V11L10 5.5Z" fill="#a8a8a8"/></svg>
<div class="a ui tr" style="left:73px;top:740px">target</div>
<svg class="a" style="left:51px;top:764px" width="17" height="21" viewBox="0 0 17 21"><path d="M1.25 1.25H10L13.75 5V17.75H1.25Z" fill="#fff" stroke="#9a9a9a" stroke-width="2.5"/><path d="M9.5 1.5V5.5H13.5" fill="none" stroke="#9a9a9a" stroke-width="1.5"/></svg>
<div class="a ui tr" style="left:72px;top:763px">mmall.iml</div>
</div>
<div class="a sbar"></div>
<div class="a thumb"></div>
<div class="a divider"></div>
<div class="a tabbar"></div>
<div class="a tab" style="left:526px;width:203px"></div>
<svg class="a" style="left:536px;top:53px" width="19" height="22" viewBox="0 0 19 22"><path d="M1.25 1.25H10L13.75 5V17.75H1.25Z" fill="#fff" stroke="#9a9a9a" stroke-width="2.5"/><path d="M9.5 1.5V5.5H13.5" fill="none" stroke="#9a9a9a" stroke-width="1.5"/><rect x="0" y="15" width="15" height="4" fill="#9a9a9a"/><rect x="0" y="6" width="17" height="9" fill="#f4ad47"/><path d="M7 7.5L4.3 10.3L7 13M10 7.5L12.7 10.3L10 13" fill="none" stroke="#5e4b3f" stroke-width="1.1"/><ellipse cx="12.8" cy="15.3" rx="5.6" ry="4.3" fill="#37a548" transform="rotate(-28 12.8 15.3)"/><path d="M9.5 18.3Q13.5 17 16 13" fill="none" stroke="#d8efd8" stroke-width="0.9" stroke-dasharray="1.2 0.8"/></svg>
<div class="a ui tabt" style="left:557px">applicationContext.xml</div>
<svg class="a" style="left:710px;top:58px" width="10" height="10" viewBox="0 0 10 10"><path d="M1 1L9 9M9 1L1 9" stroke="#6e6e6e" stroke-width="1.6"/></svg>
<div class="a tab act" style="left:729px;width:276px"></div>
<svg class="a" style="left:739px;top:53px" width="19" height="22" viewBox="0 0 19 22"><path d="M1.25 1.25H10L13.75 5V17.75H1.25Z" fill="#fff" stroke="#9a9a9a" stroke-width="2.5"/><path d="M9.5 1.5V5.5H13.5" fill="none" stroke="#9a9a9a" stroke-width="1.5"/><rect x="0" y="15" width="15" height="4" fill="#9a9a9a"/><rect x="0" y="6" width="17" height="9" fill="#f4ad47"/><path d="M7 7.5L4.3 10.3L7 13M10 7.5L12.7 10.3L10 13" fill="none" stroke="#5e4b3f" stroke-width="1.1"/><ellipse cx="12.8" cy="15.3" rx="5.6" ry="4.3" fill="#37a548" transform="rotate(-28 12.8 15.3)"/><path d="M9.5 18.3Q13.5 17 16 13" fill="none" stroke="#d8efd8" stroke-width="0.9" stroke-dasharray="1.2 0.8"/></svg>
<div class="a ui tabt" style="left:760px">applicationContext-datasource.xml</div>
<svg class="a" style="left:986px;top:58px" width="10" height="10" viewBox="0 0 10 10"><path d="M1 1L9 9M9 1L1 9" stroke="#6e6e6e" stroke-width="1.6"/></svg>
<div class="a tab" style="left:1005px;width:165px"></div>
<svg class="a" style="left:1016px;top:53px" width="18" height="21" viewBox="0 0 18 21"><path d="M1.25 1.25H10L13.75 5V17.75H1.25Z" fill="#fff" stroke="#9a9a9a" stroke-width="2.5"/><path d="M9.5 1.5V5.5H13.5" fill="none" stroke="#9a9a9a" stroke-width="1.5"/><rect x="5" y="11" width="3.2" height="8" fill="#ee8a80"/><rect x="9" y="9" width="3.8" height="10" fill="#f2a74a"/><rect x="13" y="7" width="3.8" height="12" fill="#4fb851"/></svg>
<div class="a ui tabt" style="left:1036px">mmall.properties</div>
<svg class="a" style="left:1151px;top:58px" width="10" height="10" viewBox="0 0 10 10"><path d="M1 1L9 9M9 1L1 9" stroke="#6e6e6e" stroke-width="1.6"/></svg>
<div class="a tab" style="left:1171px;width:194px"></div>
<svg class="a" style="left:1182px;top:53px" width="18" height="21" viewBox="0 0 18 21"><path d="M1.25 1.25H10L13.75 5V17.75H1.25Z" fill="#fff" stroke="#9a9a9a" stroke-width="2.5"/><path d="M9.5 1.5V5.5H13.5" fill="none" stroke="#9a9a9a" stroke-width="1.5"/><rect x="5" y="11" width="3.2" height="8" fill="#ee8a80"/><rect x="9" y="9" width="3.8" height="10" fill="#f2a74a"/><rect x="13" y="7" width="3.8" height="12" fill="#4fb851"/></svg>
<div class="a ui tabt" style="left:1202px">datasource.properties</div>
<svg class="a" style="left:1346px;top:58px" width="10" height="10" viewBox="0 0 10 10"><path d="M1 1L9 9M9 1L1 9" stroke="#6e6e6e" stroke-width="1.6"/></svg>
<div class="a tab" style="left:1366px;width:185px"></div>
<svg class="a" style="left:1376px;top:53px" width="19" height="22" viewBox="0 0 19 22"><path d="M1.25 1.25H10L13.75 5V17.75H1.25Z" fill="#fff" stroke="#9a9a9a" stroke-width="2.5"/><path d="M9.5 1.5V5.5H13.5" fill="none" stroke="#9a9a9a" stroke-width="1.5"/><rect x="0" y="15" width="15" height="4" fill="#9a9a9a"/><rect x="0" y="6" width="17" height="9" fill="#f4ad47"/><path d="M7 7.5L4.3 10.3L7 13M10 7.5L12.7 10.3L10 13" fill="none" stroke="#5e4b3f" stroke-width="1.1"/></svg>
<div class="a ui tabt" style="left:1397px">generatorConfig.xml</div>
<svg class="a" style="left:1532px;top:58px" width="10" height="10" viewBox="0 0 10 10"><path d="M1 1L9 9M9 1L1 9" stroke="#6e6e6e" stroke-width="1.6"/></svg>
<div class="a tab" style="left:1552px;width:148px"></div>
<svg class="a" style="left:1563px;top:53px" width="18" height="21" viewBox="0 0 18 21"><path d="M1.25 1.25H10L13.75 5V17.75H1.25Z" fill="#fff" stroke="#9a9a9a" stroke-width="2.5"/><path d="M9.5 1.5V5.5H13.5" fill="none" stroke="#9a9a9a" stroke-width="1.5"/><rect x="5" y="11" width="3.2" height="8" fill="#ee8a80"/><rect x="9" y="9" width="3.8" height="10" fill="#f2a74a"/><rect x="13" y="7" width="3.8" height="12" fill="#4fb851"/></svg>
<div class="a ui tabt" style="left:1583px">zfbinfo.properties</div>
<svg class="a" style="left:1681px;top:58px" width="10" height="10" viewBox="0 0 10 10"><path d="M1 1L9 9M9 1L1 9" stroke="#6e6e6e" stroke-width="1.6"/></svg>
<div class="a" style="left:526px;top:76px;width:1068px;height:3px;background:#fff"></div>
<div class="a crumbs"></div>
<div class="a crumb" style="left:570px;width:56px">beans</div>
<div class="a crumb" style="left:629px;width:47px">bean</div>
<div class="a crumb cur" style="left:679px;width:83px">property</div>
<div class="a ctxbar"></div>
<svg class="a" style="left:538px;top:115px" width="20" height="22" viewBox="0 0 20 22"><rect x="1" y="6" width="11" height="14" fill="#b5b5b5"/><rect x="4" y="3.5" width="11" height="14" fill="#9a9a9a" stroke="#f0fbf0" stroke-width="1"/><path d="M7 1H14L18 5V15H7Z" fill="#fff" stroke="#8a8a8a" stroke-width="2"/></svg>
<div class="a ui ctx" style="left:562px"><span class="lnk">All Contexts</span>. File is included in <b>4 contexts.</b></div>
<div class="a gutter"></div>
<div class="a editor"></div>
<div class="a" style="left:526px;top:333px;width:1068px;height:21px;background:#fffae3"></div>
<div class="a" style="left:568px;top:144px;width:1px;height:699px;background:#d8d8d8"></div>
<div class="a" style="left:613px;top:144px;width:1px;height:105px;background:#e6e6e6"></div>
<div class="a" style="left:649px;top:144px;width:1px;height:84px;background:#e6e6e6"></div>
<div class="a" style="left:685px;top:165px;width:1px;height:21px;background:#e6e6e6"></div>
<div class="a" style="left:613px;top:354px;width:1px;height:489px;background:#e6e6e6"></div>
<div class="row" style="top:144px">            <span class="tg"><span class="b">&lt;</span><span class="t">list</span><span class="b">&gt;</span></span></div>
<div class="row" style="top:165px">                <span class="tg"><span class="b">&lt;</span><span class="t">value</span><span class="b">&gt;</span></span><span class="x">classpath:datasource.properties</span><span class="tg"><span class="b">&lt;/</span><span class="t">value</span><span class="b">&gt;</span></span></div>
<div class="row" style="top:186px">            <span class="tg"><span class="b">&lt;/</span><span class="t">list</span><span class="b">&gt;</span></span></div>
<div class="row" style="top:207px">        <span class="tg"><span class="b">&lt;/</span><span class="t">property</span><span class="b">&gt;</span></span></div>
<div class="row" style="top:228px">        <span class="tg"><span class="b">&lt;</span><span class="t">property</span> <span class="n">name</span><span class="v">="fileEncoding"</span> <span class="n">value</span><span class="v">="utf-8"</span><span class="b">/&gt;</span></span></div>
<div class="row" style="top:249px">    <span class="tg"><span class="b">&lt;/</span><span class="t">bean</span><span class="b">&gt;</span></span></div>
<div class="row" style="top:270px"></div>
<div class="row" style="top:291px"></div>
<div class="row" style="top:312px">    <span class="tg"><span class="b">&lt;</span><span class="t">bean</span> <span class="n">id</span><span class="v">="dataSource"</span> <span class="n">class</span><span class="v">="org.apache.commons.dbcp.BasicDataSource"</span> <span class="n">destroy-method</span><span class="v">="close"</span><span class="b">&gt;</span></span></div>
<div class="row" style="top:333px">        <span class="tg0"><span class="b">&lt;</span><span class="t">property</span> <span class="n">name</span><span class="v">="driverClassName"</span> <span class="n">value</span><span class="v">="${</span><span class="p">db.driverClassName</span><span class="v">}"</span><span class="b">/&gt;</span></span></div>
<div class="row" style="top:354px">        <span class="tg"><span class="b">&lt;</span><span class="t">property</span> <span class="n">name</span><span class="v">="url"</span> <span class="n">value</span><span class="v">="${</span><span class="p">db.url</span><span class="v">}"</span><span class="b">/&gt;</span></span></div>
<div class="row" style="top:375px">        <span class="tg"><span class="b">&lt;</span><span class="t">property</span> <span class="n">name</span><span class="v">="username"</span> <span class="n">value</span><span class="v">="${</span><span class="p">db.username</span><span class="v">}"</span><span class="b">/&gt;</span></span></div>
<div class="row" style="top:396px">        <span class="tg"><span class="b">&lt;</span><span class="t">property</span> <span class="n">name</span><span class="v">="password"</span> <span class="n">value</span><span class="v">="${</span><span class="p">db.password</span><span class="v">}"</span><span class="b">/&gt;</span></span></div>
<div class="row" style="top:417px">        <span class="c">&lt;!-- <svg class="k" width="17" height="21"><use href="#g6"/></svg><svg class="k" width="17" height="21"><use href="#g5"/></svg><svg class="k" width="17" height="21"><use href="#g0"/></svg><svg class="k" width="17" height="21"><use href="#g7"/></svg><svg class="k" width="17" height="21"><use href="#g0"/></svg><svg class="k" width="17" height="21"><use href="#g6"/></svg><svg class="k" width="17" height="21"><use href="#g4"/></svg><svg class="k" width="17" height="21"><use href="#g5"/></svg><svg class="k" width="17" height="21"><use href="#g3"/></svg><svg class="k" width="17" height="21"><use href="#g4"/></svg> --&gt;</span></div>
<div class="row" style="top:438px">        <span class="tg"><span class="b">&lt;</span><span class="t">property</span> <span class="n">name</span><span class="v">="initialSize"</span> <span class="n">value</span><span class="v">="${</span><span class="p">db.initialSize</span><span class="v">}"</span><span class="b">/&gt;</span></span></div>
<div class="row" style="top:459px">        <span class="c">&lt;!-- <svg class="k" width="17" height="21"><use href="#g6"/></svg><svg class="k" width="17" height="21"><use href="#g5"/></svg><svg class="k" width="17" height="21"><use href="#g0"/></svg><svg class="k" width="17" height="21"><use href="#g4"/></svg><svg class="k" width="17" height="21"><use href="#g0"/></svg><svg class="k" width="17" height="21"><use href="#g7"/></svg><svg class="k" width="17" height="21"><use href="#g4"/></svg> --&gt;</span></div>
<div class="row" style="top:480px">        <span class="tg"><span class="b">&lt;</span><span class="t">property</span> <span class="n">name</span><span class="v">="maxActive"</span> <span class="n">value</span><span class="v">="${</span><span class="p">db.maxActive</span><span class="v">}"</span><span class="b">/&gt;</span></span></div>
<div class="row" style="top:501px">        <span class="c">&lt;!-- <svg class="k" width="17" height="21"><use href="#g0"/></svg><svg class="k" width="17" height="21"><use href="#g7"/></svg><svg class="k" width="17" height="21"><use href="#g2"/></svg><svg class="k" width="17" height="21"><use href="#g2"/></svg><svg class="k" width="17" height="21"><use href="#g4"/></svg>.<svg class="k" width="17" height="21"><use href="#g3"/></svg><svg class="k" width="17" height="21"><use href="#g7"/></svg><svg class="k" width="17" height="21"><use href="#g7"/></svg><svg class="k" width="17" height="21"><use href="#g0"/></svg><svg class="k" width="17" height="21"><use href="#g2"/></svg><svg class="k" width="17" height="21"><use href="#g0"/></svg><svg class="k" width="17" height="21"><use href="#g0"/></svg><svg class="k" width="17" height="21"><use href="#g6"/></svg><svg class="k" width="17" height="21"><use href="#g4"/></svg><svg class="k" width="17" height="21"><use href="#g6"/></svg><svg class="k" width="17" height="21"><use href="#gc"/></svg><svg class="k" width="17" height="21"><use href="#g6"/></svg><svg class="k" width="17" height="21"><use href="#g5"/></svg><svg class="k" width="17" height="21"><use href="#g0"/></svg><svg class="k" width="17" height="21"><use href="#g7"/></svg><svg class="k" width="17" height="21"><use href="#g5"/></svg><svg class="k" width="17" height="21"><use href="#g2"/></svg><svg class="k" width="17" height="21"><use href="#g2"/></svg><svg class="k" width="17" height="21"><use href="#g6"/></svg><svg class="k" width="17" height="21"><use href="#g2"/></svg><svg class="k" width="17" height="21"><use href="#g7"/></svg><svg class="k" width="17" height="21"><use href="#g0"/></svg><svg class="k" width="17" height="21"><use href="#g5"/></svg><svg class="k" width="17" height="21"><use href="#g0"/></svg><svg class="k" width="17" height="21"><use href="#g4"/></svg><svg class="k" width="17" height="21"><use href="#g6"/></svg><svg class="k" width="17" height="21"><use href="#g5"/></svg><svg class="k" width="17" height="21"><use href="#g2"/></svg><svg class="k" width="17" height="21"><use href="#g2"/></svg><svg class="k" width="17" height="21"><use href="#g2"/></svg><svg class="k" width="17" height="21"><use href="#g6"/></svg><svg class="k" width="17" height="21"><use href="#g0"/></svg><svg class="k" width="17" height="21"><use href="#g0"/></svg><svg class="k" width="17" height="21"><use href="#g6"/></svg><svg class="k" width="17" height="21"><use href="#gc"/></svg><svg class="k" width="17" height="21"><use href="#g0"/></svg><svg class="k" width="17" height="21"><use href="#g4"/></svg><svg class="k" width="17" height="21"><use href="#g7"/></svg><svg class="k" width="17" height="21"><use href="#g1"/></svg><svg class="k" width="17" height="21"><use href="#g0"/></svg>maxIdle<svg class="k" width="17" height="21"><use href="#g2"/></svg><svg class="k" width="17" height="21"><use href="#g2"/></svg> --&gt;</span></div>
<div class="row" style="top:522px">        <span class="tg"><span class="b">&lt;</span><span class="t">property</span> <span class="n">name</span><span class="v">="maxIdle"</span> <span class="n">value</span><span class="v">="${</span><span class="p">db.maxIdle</span><span class="v">}"</span><span class="b">/&gt;</span></span></div>
<div class="row" style="top:543px">        <span class="c">&lt;!-- <svg class="k" width="17" height="21"><use href="#g0"/></svg><svg class="k" width="17" height="21"><use href="#g7"/></svg><svg class="k" width="17" height="21"><use href="#g2"/></svg><svg class="k" width="17" height="21"><use href="#g2"/></svg><svg class="k" width="17" height="21"><use href="#g4"/></svg>.<svg class="k" width="17" height="21"><use href="#g3"/></svg><svg class="k" width="17" height="21"><use href="#g2"/></svg><svg class="k" width="17" height="21"><use href="#g2"/></svg><svg class="k" width="17" height="21"><use href="#g4"/></svg><svg class="k" width="17" height="21"><use href="#g6"/></svg><svg class="k" width="17" height="21"><use href="#g5"/></svg><svg class="k" width="17" height="21"><use href="#g0"/></svg><svg class="k" width="17" height="21"><use href="#g1"/></svg><svg class="k" width="17" height="21"><use href="#g6"/></svg><svg class="k" width="17" height="21"><use href="#g0"/></svg><svg class="k" width="17" height="21"><use href="#g4"/></svg><svg class="k" width="17" height="21"><use href="#g6"/></svg><svg class="k" width="17" height="21"><use href="#gc"/></svg><svg class="k" width="17" height="21"><use href="#g6"/></svg><svg class="k" width="17" height="21"><use href="#g5"/></svg><svg class="k" width="17" height="21"><use href="#g0"/></svg><svg class="k" width="17" height="21"><use href="#g1"/></svg><svg class="k" width="17" height="21"><use href="#g2"/></svg><svg class="k" width="17" height="21"><use href="#g4"/></svg><svg class="k" width="17" height="21"><use href="#g3"/></svg><svg class="k" width="17" height="21"><use href="#g7"/></svg><svg class="k" width="17" height="21"><use href="#g3"/></svg><svg class="k" width="17" height="21"><use href="#g0"/></svg><svg class="k" width="17" height="21"><use href="#g3"/></svg><svg class="k" width="17" height="21"><use href="#g6"/></svg><svg class="k" width="17" height="21"><use href="#g5"/></svg><svg class="k" width="17" height="21"><use href="#gc"/></svg><svg class="k" width="17" height="21"><use href="#g5"/></svg><svg class="k" width="17" height="21"><use href="#g5"/></svg><svg class="k" width="17" height="21"><use href="#g2"/></svg><svg class="k" width="17" height="21"><use href="#g0"/></svg><svg class="k" width="17" height="21"><use href="#g5"/></svg><svg class="k" width="17" height="21"><use href="#g6"/></svg><svg class="k" width="17" height="21"><use href="#g5"/></svg><svg class="k" width="17" height="21"><use href="#g5"/></svg><svg class="k" width="17" height="21"><use href="#g2"/></svg><svg class="k" width="17" height="21"><use href="#g3"/></svg><svg class="k" width="17" height="21"><use href="#g7"/></svg> --&gt;</span></div>
<div class="row" style="top:564px">        <span class="tg"><span class="b">&lt;</span><span class="t">property</span> <span class="n">name</span><span class="v">="minIdle"</span> <span class="n">value</span><span class="v">="${</span><span class="p">db.minIdle</span><span class="v">}"</span><span class="b">/&gt;</span></span></div>
<div class="row" style="top:585px">        <span class="c">&lt;!-- <svg class="k" width="17" height="21"><use href="#g0"/></svg><svg class="k" width="17" height="21"><use href="#g7"/></svg><svg class="k" width="17" height="21"><use href="#g2"/></svg><svg class="k" width="17" height="21"><use href="#g3"/></svg><svg class="k" width="17" height="21"><use href="#g6"/></svg><svg class="k" width="17" height="21"><use href="#g5"/></svg><svg class="k" width="17" height="21"><use href="#g1"/></svg><svg class="k" width="17" height="21"><use href="#g5"/></svg><svg class="k" width="17" height="21"><use href="#g6"/></svg><svg class="k" width="17" height="21"><use href="#g4"/></svg><svg class="k" width="17" height="21"><use href="#gp"/></svg><svg class="k" width="17" height="21"><use href="#g2"/></svg><svg class="k" width="17" height="21"><use href="#g4"/></svg><svg class="k" width="17" height="21"><use href="#g5"/></svg><svg class="k" width="17" height="21"><use href="#g7"/></svg><svg class="k" width="17" height="21"><use href="#g4"/></svg><svg class="k" width="17" height="21"><use href="#g6"/></svg><svg class="k" width="17" height="21"><use href="#g4"/></svg><svg class="k" width="17" height="21"><use href="#g6"/></svg><svg class="k" width="17" height="21"><use href="#g5"/></svg><svg class="k" width="17" height="21"><use href="#g0"/></svg><svg class="k" width="17" height="21"><use href="#g2"/></svg><svg class="k" width="17" height="21"><use href="#g0"/></svg><svg class="k" width="17" height="21"><use href="#gp"/></svg><svg class="k" width="17" height="21"><use href="#g6"/></svg><svg class="k" width="17" height="21"><use href="#g2"/></svg><svg class="k" width="17" height="21"><use href="#g0"/></svg>1<svg class="k" width="17" height="21"><use href="#g0"/></svg><svg class="k" width="17" height="21"><use href="#g2"/></svg><svg class="k" width="17" height="21"><use href="#g0"/></svg><svg class="k" width="17" height="21"><use href="#g0"/></svg><svg class="k" width="17" height="21"><use href="#g6"/></svg> --&gt;</span></div>
<div class="row" style="top:606px">        <span class="tg"><span class="b">&lt;</span><span class="t">property</span> <span class="n">name</span><span class="v">="maxWait"</span> <span class="n">value</span><span class="v">="${</span><span class="p">db.maxWait</span><span class="v">}"</span><span class="b">/&gt;</span></span></div>
<div class="row" style="top:627px">        <span class="c">&lt;!--#<svg class="k" width="17" height="21"><use href="#g1"/></svg><svg class="k" width="17" height="21"><use href="#g2"/></svg><svg class="k" width="17" height="21"><use href="#g0"/></svg><svg class="k" width="17" height="21"><use href="#g1"/></svg><svg class="k" width="17" height="21"><use href="#g0"/></svg><svg class="k" width="17" height="21"><use href="#g5"/></svg><svg class="k" width="17" height="21"><use href="#g4"/></svg>sql<svg class="k" width="17" height="21"><use href="#g5"/></svg><svg class="k" width="17" height="21"><use href="#g5"/></svg><svg class="k" width="17" height="21"><use href="#g3"/></svg><svg class="k" width="17" height="21"><use href="#g4"/></svg><svg class="k" width="17" height="21"><use href="#g4"/></svg><svg class="k" width="17" height="21"><use href="#g1"/></svg> --&gt;</span></div>
<div class="row" style="top:648px">        <span class="c">&lt;!--&lt;property name="validationQuery" value="select getdate()" /&gt;--&gt;</span></div>
<div class="row" style="top:669px">        <span class="tg"><span class="b">&lt;</span><span class="t">property</span> <span class="n">name</span><span class="v">="defaultAutoCommit"</span> <span class="n">value</span><span class="v">="${</span><span class="p">db.defaultAutoCommit</span><span class="v">}"</span><span class="b">/&gt;</span></span></div>
<div class="row" style="top:690px">        <span class="c">&lt;!-- <svg class="k" width="17" height="21"><use href="#g6"/></svg><svg class="k" width="17" height="21"><use href="#g6"/></svg><svg class="k" width="17" height="21"><use href="#g3"/></svg><svg class="k" width="17" height="21"><use href="#g7"/></svg><svg class="k" width="17" height="21"><use href="#g3"/></svg><svg class="k" width="17" height="21"><use href="#g4"/></svg><svg class="k" width="17" height="21"><use href="#gl"/></svg><svg class="k" width="17" height="21"><use href="#g0"/></svg><svg class="k" width="17" height="21"><use href="#g4"/></svg><svg class="k" width="17" height="21"><use href="#g7"/></svg><svg class="k" width="17" height="21"><use href="#g0"/></svg><svg class="k" width="17" height="21"><use href="#g6"/></svg><svg class="k" width="17" height="21"><use href="#g2"/></svg><svg class="k" width="17" height="21"><use href="#g6"/></svg><svg class="k" width="17" height="21"><use href="#g4"/></svg><svg class="k" width="17" height="21"><use href="#gr"/></svg><svg class="k" width="17" height="21"><use href="#g0"/></svg><svg class="k" width="17" height="21"><use href="#g6"/></svg><svg class="k" width="17" height="21"><use href="#g3"/></svg><svg class="k" width="17" height="21"><use href="#g6"/></svg><svg class="k" width="17" height="21"><use href="#g5"/></svg><svg class="k" width="17" height="21"><use href="#g0"/></svg><svg class="k" width="17" height="21"><use href="#g6"/></svg><svg class="k" width="17" height="21"><use href="#g5"/></svg><svg class="k" width="17" height="21"><use href="#g0"/></svg><svg class="k" width="17" height="21"><use href="#g5"/></svg> --&gt;</span></div>
<div class="row" style="top:711px">        <span class="c">&lt;!--&lt;property name="removeAbandoned" value="true" /&gt;--&gt;</span></div>
<div class="row" style="top:732px">        <span class="c">&lt;!-- <svg class="k" width="17" height="21"><use href="#g0"/></svg><svg class="k" width="17" height="21"><use href="#g6"/></svg><svg class="k" width="17" height="21"><use href="#g3"/></svg><svg class="k" width="17" height="21"><use href="#g6"/></svg><svg class="k" width="17" height="21"><use href="#g5"/></svg><svg class="k" width="17" height="21"><use href="#g7"/></svg><svg class="k" width="17" height="21"><use href="#g2"/></svg><svg class="k" width="17" height="21"><use href="#g7"/></svg><svg class="k" width="17" height="21"><use href="#g6"/></svg><svg class="k" width="17" height="21"><use href="#g4"/></svg><svg class="k" width="17" height="21"><use href="#g5"/></svg><svg class="k" width="17" height="21"><use href="#g0"/></svg><svg class="k" width="17" height="21"><use href="#g6"/></svg><svg class="k" width="17" height="21"><use href="#g3"/></svg><svg class="k" width="17" height="21"><use href="#g6"/></svg><svg class="k" width="17" height="21"><use href="#g2"/></svg><svg class="k" width="17" height="21"><use href="#g3"/></svg><svg class="k" width="17" height="21"><use href="#g7"/></svg><svg class="k" width="17" height="21"><use href="#g3"/></svg><svg class="k" width="17" height="21"><use href="#g4"/></svg><svg class="k" width="17" height="21"><use href="#g6"/></svg><svg class="k" width="17" height="21"><use href="#g6"/></svg><svg class="k" width="17" height="21"><use href="#g6"/></svg><svg class="k" width="17" height="21"><use href="#g5"/></svg><svg class="k" width="17" height="21"><use href="#g0"/></svg><svg class="k" width="17" height="21"><use href="#g5"/></svg> --&gt;</span></div>
<div class="row" style="top:753px">        <span class="c">&lt;!--&lt;property name="removeAbandonedTimeout" value="120" /&gt;--&gt;</span></div>
<div class="row" style="top:774px">        <span class="c">&lt;!-- #<svg class="k" width="17" height="21"><use href="#g6"/></svg><svg class="k" width="17" height="21"><use href="#g5"/></svg><svg class="k" width="17" height="21"><use href="#g4"/></svg><svg class="k" width="17" height="21"><use href="#g5"/></svg><svg class="k" width="17" height="21"><use href="#g6"/></svg><svg class="k" width="17" height="21"><use href="#g6"/></svg><svg class="k" width="17" height="21"><use href="#g4"/></svg><svg class="k" width="17" height="21"><use href="#gc"/></svg><svg class="k" width="17" height="21"><use href="#g0"/></svg><svg class="k" width="17" height="21"><use href="#g4"/></svg><svg class="k" width="17" height="21"><use href="#g2"/></svg><svg class="k" width="17" height="21"><use href="#g2"/></svg><svg class="k" width="17" height="21"><use href="#g7"/></svg><svg class="k" width="17" height="21"><use href="#g6"/></svg><svg class="k" width="17" height="21"><use href="#gp"/></svg> --&gt;</span></div>
<div class="row" style="top:795px">        <span class="tg"><span class="b">&lt;</span><span class="t">property</span> <span class="n">name</span><span class="v">="minEvictableIdleTimeMillis"</span> <span class="n">value</span><span class="v">="${</span><span class="p">db.minEvictableIdleTimeMillis</span><span class="v">}"</span><span class="b">/&gt;</span></span></div>
<div class="row" style="top:816px"></div>
<div class="row" style="top:837px">        <span class="c">&lt;!-- <svg class="k" width="17" height="21"><use href="#g3"/></svg><svg class="k" width="17" height="21"><use href="#g6"/></svg><svg class="k" width="17" height="21"><use href="#g5"/></svg><svg class="k" width="17" height="21"><use href="#g0"/></svg><svg class="k" width="17" height="21"><use href="#g5"/></svg><svg class="k" width="17" height="21"><use href="#g4"/></svg><svg class="k" width="17" height="21"><use href="#g6"/></svg><svg class="k" width="17" height="21"><use href="#g5"/></svg><svg class="k" width="17" height="21"><use href="#g2"/></svg><svg class="k" width="17" height="21"><use href="#g2"/></svg><svg class="k" width="17" height="21"><use href="#g6"/></svg><svg class="k" width="17" height="21"><use href="#g4"/></svg><svg class="k" width="17" height="21"><use href="#g5"/></svg><svg class="k" width="17" height="21"><use href="#g7"/></svg><svg class="k" width="17" height="21"><use href="#g4"/></svg><svg class="k" width="17" height="21"><use href="#g4"/></svg><svg class="k" width="17" height="21"><use href="#g6"/></svg><svg class="k" width="17" height="21"><use href="#g3"/></svg><svg class="k" width="17" height="21"><use href="#g6"/></svg><svg class="k" width="17" height="21"><use href="#g6"/></svg> --&gt;</span></div>
<svg class="a" style="left:1105px;top:666px" width="66" height="3" viewBox="0 0 66 3"><path d="M0 2L2 0L4 2L6 0L8 2L10 0L12 2L14 0L16 2L18 0L20 2L22 0L24 2L26 0L28 2L30 0L32 2L34 0L36 2L38 0L40 2L42 0L44 2L46 0L48 2L50 0L52 2L54 0L56 2L58 0L60 2L62 0L64 2" fill="none" stroke="#b5c8a8" stroke-width="0.8"/></svg>
<svg class="a" style="left:563px;top:151px" width="11" height="13" viewBox="0 0 11 13"><path d="M0.5 0.5H10.5V8.5L5.5 12L0.5 8.5Z" fill="#fff" stroke="#c8c8c8" stroke-width="1"/><path d="M3 6.5H8" stroke="#c0c0c0" stroke-width="1"/></svg>
<svg class="a" style="left:563px;top:193px" width="11" height="13" viewBox="0 0 11 13"><path d="M0.5 11.5H10.5V3.5L5.5 0L0.5 3.5Z" fill="#fff" stroke="#c8c8c8" stroke-width="1"/><path d="M3 6.5H8" stroke="#c0c0c0" stroke-width="1"/></svg>
<svg class="a" style="left:563px;top:214px" width="11" height="13" viewBox="0 0 11 13"><path d="M0.5 11.5H10.5V3.5L5.5 0L0.5 3.5Z" fill="#fff" stroke="#c8c8c8" stroke-width="1"/><path d="M3 6.5H8" stroke="#c0c0c0" stroke-width="1"/></svg>
<svg class="a" style="left:563px;top:256px" width="11" height="13" viewBox="0 0 11 13"><path d="M0.5 11.5H10.5V3.5L5.5 0L0.5 3.5Z" fill="#fff" stroke="#c8c8c8" stroke-width="1"/><path d="M3 6.5H8" stroke="#c0c0c0" stroke-width="1"/></svg>
<svg class="a" style="left:563px;top:319px" width="11" height="13" viewBox="0 0 11 13"><path d="M0.5 0.5H10.5V8.5L5.5 12L0.5 8.5Z" fill="#fff" stroke="#c8c8c8" stroke-width="1"/><path d="M3 6.5H8" stroke="#c0c0c0" stroke-width="1"/></svg>
<div class="a" style="left:575px;top:333px;width:40px;height:23px;border:1px solid #9a9a9a;border-bottom:none;border-top:none"></div>
<svg class="a" style="left:584px;top:330px" width="26" height="22" viewBox="0 0 26 22"><circle cx="7" cy="7" r="6.3" fill="#e9735f"/><path d="M7 3V8.5M7 10V11.5" stroke="#fff" stroke-width="2"/><rect x="3.5" y="14" width="7" height="5" rx="2" fill="#7b7b7b"/><path d="M18 2H25L21.5 6Z" fill="#3d9ad8"/></svg>
<div class="a tip">Click or press Alt+Enter</div>
<svg class="a" style="left:588px;top:328px" width="16" height="11" viewBox="0 0 16 11"><path d="M0 0L8 10L14 0" fill="#fffdd0" stroke="#9c9c9c" stroke-width="1"/><rect x="1" y="0" width="12" height="1.5" fill="#fffdd0"/></svg>
<div class="a popup"></div>
<div class="a sel"></div>
<div class="a" style="left:580px;top:388px;width:222px;height:1px;background:#c8c8c8"></div>
<svg class="a" style="left:586px;top:364px" width="14" height="20" viewBox="0 0 14 20"><circle cx="7" cy="7" r="6.3" fill="#e9735f"/><path d="M7 3V8.5M7 10V11.5" stroke="#fff" stroke-width="2"/><rect x="3.5" y="14" width="7" height="5" rx="2" fill="#6c6c6c"/></svg>
<div class="a ui pit" style="left:607px;top:362px;color:#fff">Create property</div>
<svg class="a" style="left:789px;top:368px" width="8" height="11" viewBox="0 0 8 11"><path d="M0 0V11L7.5 5.5Z" fill="#fff"/></svg>
<svg class="a" style="left:584px;top:393px" width="18" height="20" viewBox="0 0 18 20"><path d="M1 3H10M1 6H8M1 9H6" stroke="#9a9a9a" stroke-width="1"/><path d="M4 17L6 12L14 5L16 7L8 15Z" fill="#58b858"/><path d="M4 17L6 12L8 15Z" fill="#e7c79c"/></svg>
<div class="a ui pit" style="left:607px;top:392px;color:#000">Convert to p-namespace</div>
<svg class="a" style="left:789px;top:398px" width="8" height="11" viewBox="0 0 8 11"><path d="M0 0V11L7.5 5.5Z" fill="#9a9a9a"/></svg>
<svg class="a" style="left:584px;top:417px" width="18" height="20" viewBox="0 0 18 20"><path d="M1 3H10M1 6H8M1 9H6" stroke="#9a9a9a" stroke-width="1"/><path d="M4 17L6 12L14 5L16 7L8 15Z" fill="#58b858"/><path d="M4 17L6 12L8 15Z" fill="#e7c79c"/></svg>
<div class="a ui pit" style="left:607px;top:416px;color:#000">Expand Empty Tag</div>
<svg class="a" style="left:789px;top:422px" width="8" height="11" viewBox="0 0 8 11"><path d="M0 0V11L7.5 5.5Z" fill="#9a9a9a"/></svg>
<svg class="a" style="left:584px;top:441px" width="18" height="20" viewBox="0 0 18 20"><path d="M1 3H10M1 6H8M1 9H6" stroke="#9a9a9a" stroke-width="1"/><path d="M4 17L6 12L14 5L16 7L8 15Z" fill="#58b858"/><path d="M4 17L6 12L8 15Z" fill="#e7c79c"/></svg>
<div class="a ui pit" style="left:607px;top:440px;color:#000">Inject language or reference</div>
<svg class="a" style="left:789px;top:446px" width="8" height="11" viewBox="0 0 8 11"><path d="M0 0V11L7.5 5.5Z" fill="#9a9a9a"/></svg>
</body></html>
